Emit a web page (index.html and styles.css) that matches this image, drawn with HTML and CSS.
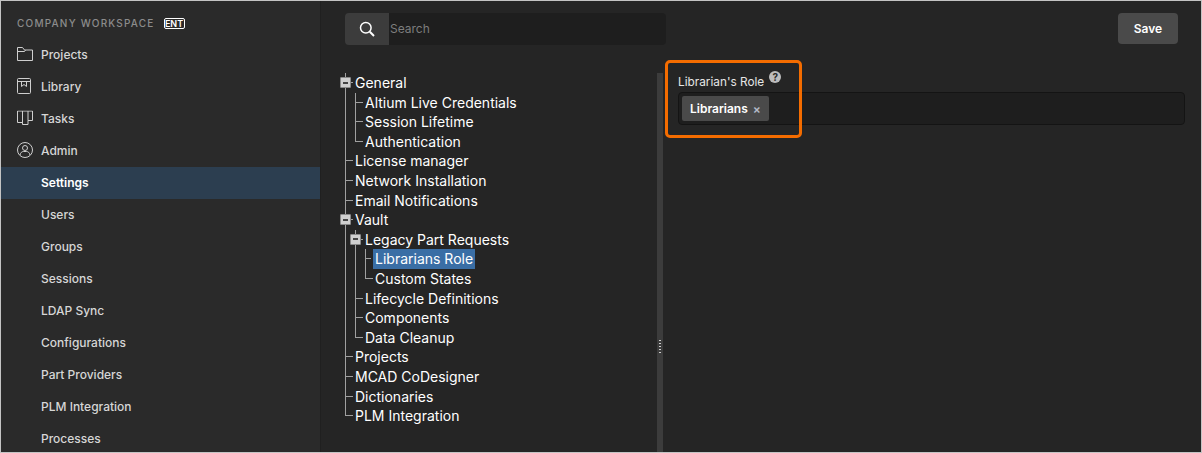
FILE: index.html
```html
<!DOCTYPE html>
<html lang="en">
<head>
<meta charset="utf-8">
<title>Settings</title>
<link rel="stylesheet" href="styles.css">
</head>
<body>
<div class="app">
  <aside class="sidebar">
    <div class="workspace"><span class="workspace-name">COMPANY WORKSPACE</span><span class="badge">ENT</span></div>
    <nav class="nav">
      <a class="nav-item"><svg class="nav-icon" width="16" height="14" viewBox="0 0 16 14" fill="none" stroke="currentColor"><path d="M.5 13.500V.5h5l2 2.500h8v10.500zM.5 4.500h7l1-1.500"/></svg>Projects</a>
      <a class="nav-item"><svg class="nav-icon" width="14" height="16" viewBox="0 0 14 16" fill="none" stroke="currentColor"><path d="M1.500.5h11a1 1 0 0 1 1 1v13a1 1 0 0 1-1 1h-11a1 1 0 0 1-1-1v-13a1 1 0 0 1 1-1zM.5 3.500h13M4.500 3.500v5l2.500-2 2.500 2v-5"/></svg>Library</a>
      <a class="nav-item"><svg class="nav-icon" width="16" height="15" viewBox="0 0 16 15" fill="none" stroke="currentColor"><path d="M.5.500h15v9.500h-4.500v-9.500M5.500.500v13.500h5.500v-4M.5.500v11.500h5"/></svg>Tasks</a>
      <a class="nav-item"><svg class="nav-icon" width="16" height="16" viewBox="0 0 16 16" fill="none" stroke="currentColor"><circle cx="8" cy="8" r="7.500"/><circle cx="8" cy="6" r="2.500"/><path d="M3 13c.5-2.500 2-3.500 3.500-3.500h3c1.500 0 3 1 3.500 3.500"/></svg>Admin</a>
      <a class="nav-item active">Settings</a>
      <a class="nav-item">Users</a>
      <a class="nav-item">Groups</a>
      <a class="nav-item">Sessions</a>
      <a class="nav-item">LDAP Sync</a>
      <a class="nav-item">Configurations</a>
      <a class="nav-item">Part Providers</a>
      <a class="nav-item">PLM Integration</a>
      <a class="nav-item">Processes</a>
    </nav>
  </aside>
  <main class="main">
    <div class="tree-pane">
      <div class="search">
        <span class="search-btn"><svg width="16" height="16" viewBox="0 0 16 16" fill="none" stroke="#fff" stroke-width="1.500"><circle cx="6.800" cy="6.800" r="5.300"/><path d="M10.800 10.800l4.200 4.200" stroke-width="2"/></svg></span>
        <span class="search-input">Search</span>
      </div>
      <ul class="tree root">
        <li class="open"><span class="label">General</span>
          <ul class="tree">
            <li><span class="label">Altium Live Credentials</span></li>
            <li><span class="label">Session Lifetime</span></li>
            <li><span class="label">Authentication</span></li>
          </ul>
        </li>
        <li><span class="label">License manager</span></li>
        <li><span class="label">Network Installation</span></li>
        <li><span class="label">Email Notifications</span></li>
        <li class="open"><span class="label">Vault</span>
          <ul class="tree">
            <li class="open"><span class="label">Legacy Part Requests</span>
              <ul class="tree">
                <li><span class="label selected">Librarians Role</span></li>
                <li><span class="label">Custom States</span></li>
              </ul>
            </li>
            <li><span class="label">Lifecycle Definitions</span></li>
            <li><span class="label">Components</span></li>
            <li><span class="label">Data Cleanup</span></li>
          </ul>
        </li>
        <li><span class="label">Projects</span></li>
        <li><span class="label">MCAD CoDesigner</span></li>
        <li><span class="label">Dictionaries</span></li>
        <li><span class="label">PLM Integration</span></li>
      </ul>
    </div>
    <div class="splitter"><span class="grip"></span></div>
    <div class="content">
      <div class="toolbar"><button class="save">Save</button></div>
      <div class="field">
        <div class="field-label">Librarian's Role<span class="help">?</span></div>
        <div class="field-input"><span class="chip">Librarians<span class="chip-x">×</span></span></div>
      </div>
    </div>
  </main>
  <div class="callout"></div>
</div>
</body>
</html>
```
FILE: styles.css
```css
* { box-sizing: border-box; }
html, body { margin: 0; padding: 0; }
body { width: 1202px; height: 453px; overflow: hidden; font-family: Inter, "Liberation Sans", sans-serif; background: #252525; }
.app { position: relative; display: flex; width: 1202px; height: 453px; border: 1px solid #c4c4c4; overflow: hidden; }

.sidebar { width: 319px; flex: none; background: #2a2a2a; overflow: hidden; }
.workspace { display: flex; align-items: center; height: 38px; padding: 6px 0 0 16px; }
.workspace-name { font-size: 10px; letter-spacing: 1.2px; color: #8c8c8c; font-weight: 500; }
.badge { margin-left: 9px; border: 1px solid #fff; border-radius: 2px; font-size: 9px; line-height: 9px; width: 21px; text-align: center; font-weight: 600; color: #fff; }
.nav { display: flex; flex-direction: column; }
.nav-item { display: flex; align-items: center; height: 32px; flex: none; padding: 0 0 2px 40px; font-size: 12px; font-weight: 500; color: #d6d6d6; position: relative; }
.nav-icon { position: absolute; left: 16px; top: 50%; transform: translateY(-50%); color: #cfcfcf; margin-top: -1px; }
.nav-item.active { background: #2c3e50; color: #fff; font-weight: 600; }

.main { flex: 1; display: flex; min-width: 0; background: #252525; border-left: 1px solid #202020; }
.tree-pane { width: 336px; flex: none; padding: 12px 0 0 24px; }
.search { display: flex; height: 32px; width: 321px; }
.search-btn { width: 44px; display: flex; align-items: center; justify-content: center; background: #3c3c3c; border-radius: 4px 0 0 4px; }
.search-input { flex: 1; background: #1e1e1e; color: #7d7d7d; font-size: 12px; line-height: 32px; padding-left: 1px; border-radius: 0 4px 4px 0; }

.tree { list-style: none; margin: 0; padding: 0; }
.tree.root { margin-top: 28px; }
.tree li { position: relative; padding-left: 10px; }
.tree li::before { content: ""; position: absolute; left: 0; top: 0; bottom: 0; width: 1px; background: #a0a0a0; }
.tree li:last-child::before { bottom: auto; height: 10px; }
.label { display: block; position: relative; width: max-content; height: 19.6px; line-height: 19.6px; font-size: 14px; color: #fff; padding: 0 2px 0 0; }
.label::before { content: ""; position: absolute; left: -9px; top: 9px; width: 7px; height: 1px; background: #a0a0a0; }
.open > .label::after { content: ""; position: absolute; left: -15px; top: 4px; width: 9px; height: 9px; border: 1px solid #8a8a8a; border-radius: 1px; background: linear-gradient(#444 0 0) center / 5px 2px no-repeat, #cfcfcf; }
.label.selected { background: #3a6ea5; margin-left: -2px; padding: 0 2px; }
.label.selected::before { left: -7px; width: 5px; }

.splitter { width: 6px; flex: none; margin-top: 72px; background: #3c3c3c; position: relative; }
.grip { position: absolute; left: 2px; top: 267px; width: 2px; height: 13px; background: repeating-linear-gradient(#d0d0d0 0 1px, transparent 1px 3px); }

.content { flex: 1; min-width: 0; padding: 12px 16px 0 15px; }
.toolbar { display: flex; justify-content: flex-end; height: 31px; padding-right: 7px; }
.save { width: 60px; height: 31px; border: 0; border-radius: 4px; background: #4a4a4a; color: #fff; font: 600 12px Inter, "Liberation Sans", sans-serif; padding: 0; }
.field { margin-top: 29px; }
.field-label { display: flex; align-items: flex-start; font-size: 11.800px; line-height: 18px; height: 19px; color: #e6e6e6; }
.help { width: 12px; height: 12px; margin: -2px 0 0 5px; border-radius: 50%; background: #bdbdbd; color: #2a2a2a; font-size: 10px; line-height: 12px; font-weight: 700; text-align: center; }
.field-input { display: flex; height: 33px; border: 1px solid #141414; border-radius: 4px; background: #1e1e1e; padding: 3px; }
.chip { display: flex; align-items: center; height: 25px; width: 87px; padding-left: 8px; background: #4a4a4a; border-radius: 2px; font-size: 12px; font-weight: 600; color: #fff; }
.chip-x { margin-left: 5px; color: #b4bac8; font-size: 12px; font-weight: 600; }

.callout { position: absolute; left: 664px; top: 59px; width: 137px; height: 78px; border: 3px solid #f46c00; border-radius: 5px; pointer-events: none; }
```
